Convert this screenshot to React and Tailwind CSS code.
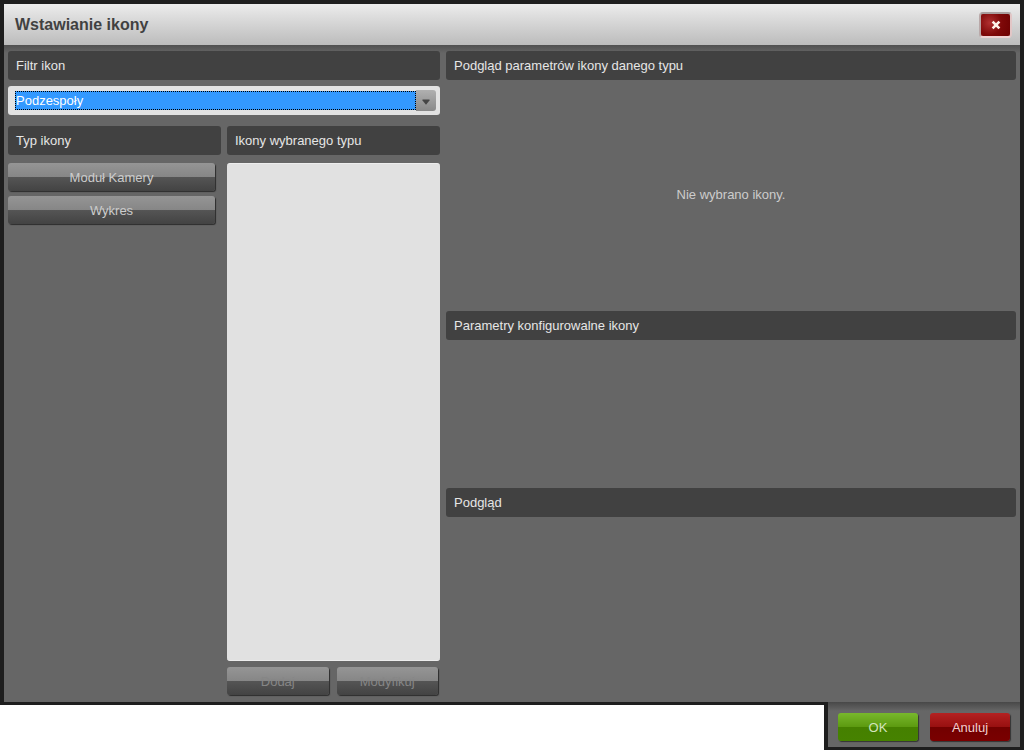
import React from "react";

function SectionTitle({ children, id }) {
  return (
    <h2
      id={id}
      className="flex h-[29px] shrink-0 items-center rounded-[3px] bg-[#414141] px-2 text-[13px] leading-4 text-[#e6e6e6]"
    >
      {children}
    </h2>
  );
}

function GreyButton({ children, className, disabled }) {
  return (
    <button
      type="button"
      disabled={disabled}
      className={
        "h-7 rounded-[3px] bg-[linear-gradient(to_bottom,#959595_0%,#868686_50%,#555555_50%,#434343_100%)] pt-0.5 text-[13px] leading-4 shadow-[1px_1px_1px_#2c2c2c] " +
        (disabled ? "text-[#868686] " : "text-[#cccccc] ") +
        className
      }
    >
      {children}
    </button>
  );
}

export default function App() {
  return (
    <div
      role="dialog"
      aria-labelledby="dialog-title"
      className="flex min-h-screen flex-col bg-white font-['Liberation_Sans',Arial,sans-serif]"
    >
      <div className="flex grow flex-col border-x-4 border-t-4 border-b-3 border-[#1e1e1e] bg-[#666666]">
        <header className="flex h-[41px] shrink-0 items-center justify-between bg-linear-to-b from-[#ececec] to-[#bcbcbc] pr-2 pl-[11px]">
          <h1 id="dialog-title" className="text-[16px] leading-5 font-bold text-[#414141]">
            Wstawianie ikony
          </h1>
          <button
            type="button"
            aria-label="Zamknij"
            className="flex h-[26px] w-[33px] items-center justify-center rounded-[4px] border-2 border-t-[#a89c9c] border-r-[#e2c6c6] border-b-[#efd2d2] border-l-[#b9a8a8] bg-[radial-gradient(circle_at_30%_40%,#b03030_0%,#7e0808_50%,#6c0000_100%)]"
          >
            <svg viewBox="0 0 10 10" className="h-2.5 w-2.5" aria-hidden="true">
              <path d="M1.6 1.6L8.4 8.4M8.4 1.6L1.6 8.4" stroke="#fff3ea" strokeWidth="2.6" />
            </svg>
          </button>
        </header>

        <main className="flex grow gap-1.5 bg-[linear-gradient(to_bottom,#505050_0px,#666666_8px)] px-1 pt-1.5 pb-1.5">
          <div className="flex w-[432px] shrink-0 flex-col">
            <SectionTitle id="filter-label">Filtr ikon</SectionTitle>
            <div className="mt-1.5 flex h-[29px] items-center rounded-[3px] bg-[#e2e2e2] pr-1 pl-[7px]">
              <select
                aria-labelledby="filter-label"
                defaultValue="Podzespoły"
                className="h-[19px] min-w-0 grow appearance-none border border-dotted border-black bg-[#3399ff] text-[13px] leading-4 text-white outline-none"
              >
                <option>Podzespoły</option>
              </select>
              <span className="flex h-[21px] w-5 items-center justify-center rounded-r-[3px] bg-linear-to-b from-[#b0b0b0] to-[#898989] pt-0.5">
                <svg viewBox="0 0 8 6" className="h-1.5 w-2" aria-hidden="true">
                  <path d="M0.5 0.5H7.5V1.5L4 5.8L0.5 1.5Z" fill="#454545" />
                </svg>
              </span>
            </div>

            <div className="mt-[11px] flex grow gap-1.5">
              <section className="flex flex-1 flex-col">
                <SectionTitle>Typ ikony</SectionTitle>
                <div className="mt-2 flex flex-col gap-[5px] pr-1.5">
                  <GreyButton className="w-full">Moduł Kamery</GreyButton>
                  <GreyButton className="w-full">Wykres</GreyButton>
                </div>
              </section>
              <section className="flex flex-1 flex-col">
                <SectionTitle>Ikony wybranego typu</SectionTitle>
                <div className="mt-2 grow rounded-[3px] border-y border-[#ededed] bg-[#e1e1e1]" />
                <div className="mt-1.5 flex gap-2 pr-0.5 pb-px">
                  <GreyButton disabled className="flex-1">
                    Dodaj
                  </GreyButton>
                  <GreyButton disabled className="flex-1">
                    Modyfikuj
                  </GreyButton>
                </div>
              </section>
            </div>
          </div>

          <div className="flex grow flex-col">
            <SectionTitle>Podgląd parametrów ikony danego typu</SectionTitle>
            <div className="flex h-[231px] items-center justify-center pb-0.5 text-[13px] leading-4 text-[#cccccc]">
              <p>Nie wybrano ikony.</p>
            </div>
            <SectionTitle>Parametry konfigurowalne ikony</SectionTitle>
            <div className="h-[148px]" />
            <SectionTitle>Podgląd</SectionTitle>
          </div>
        </main>
      </div>

      <footer className="z-10 -mt-[3px] flex shrink-0 gap-3 self-end border-x-4 border-b-3 border-[#1e1e1e] bg-[linear-gradient(to_bottom,#484848_0px,#666666_9px)] px-2.5 pt-[11px] pb-1.5">
        <button
          type="button"
          className="h-7 w-20 rounded-[3px] bg-[linear-gradient(to_bottom,#78b82c_0%,#5c9a10_50%,#458000_50%,#468200_100%)] pt-0.5 text-[13px] leading-4 text-[#d2e4bc] shadow-[1px_1px_1px_#333333]"
        >
          OK
        </button>
        <button
          type="button"
          className="h-7 w-20 rounded-[3px] bg-[linear-gradient(to_bottom,#b42222_0%,#981010_50%,#720000_50%,#7a0000_100%)] pt-0.5 text-[13px] leading-4 text-[#f2d0d0] shadow-[1px_1px_1px_#333333]"
        >
          Anuluj
        </button>
      </footer>
    </div>
  );
}
